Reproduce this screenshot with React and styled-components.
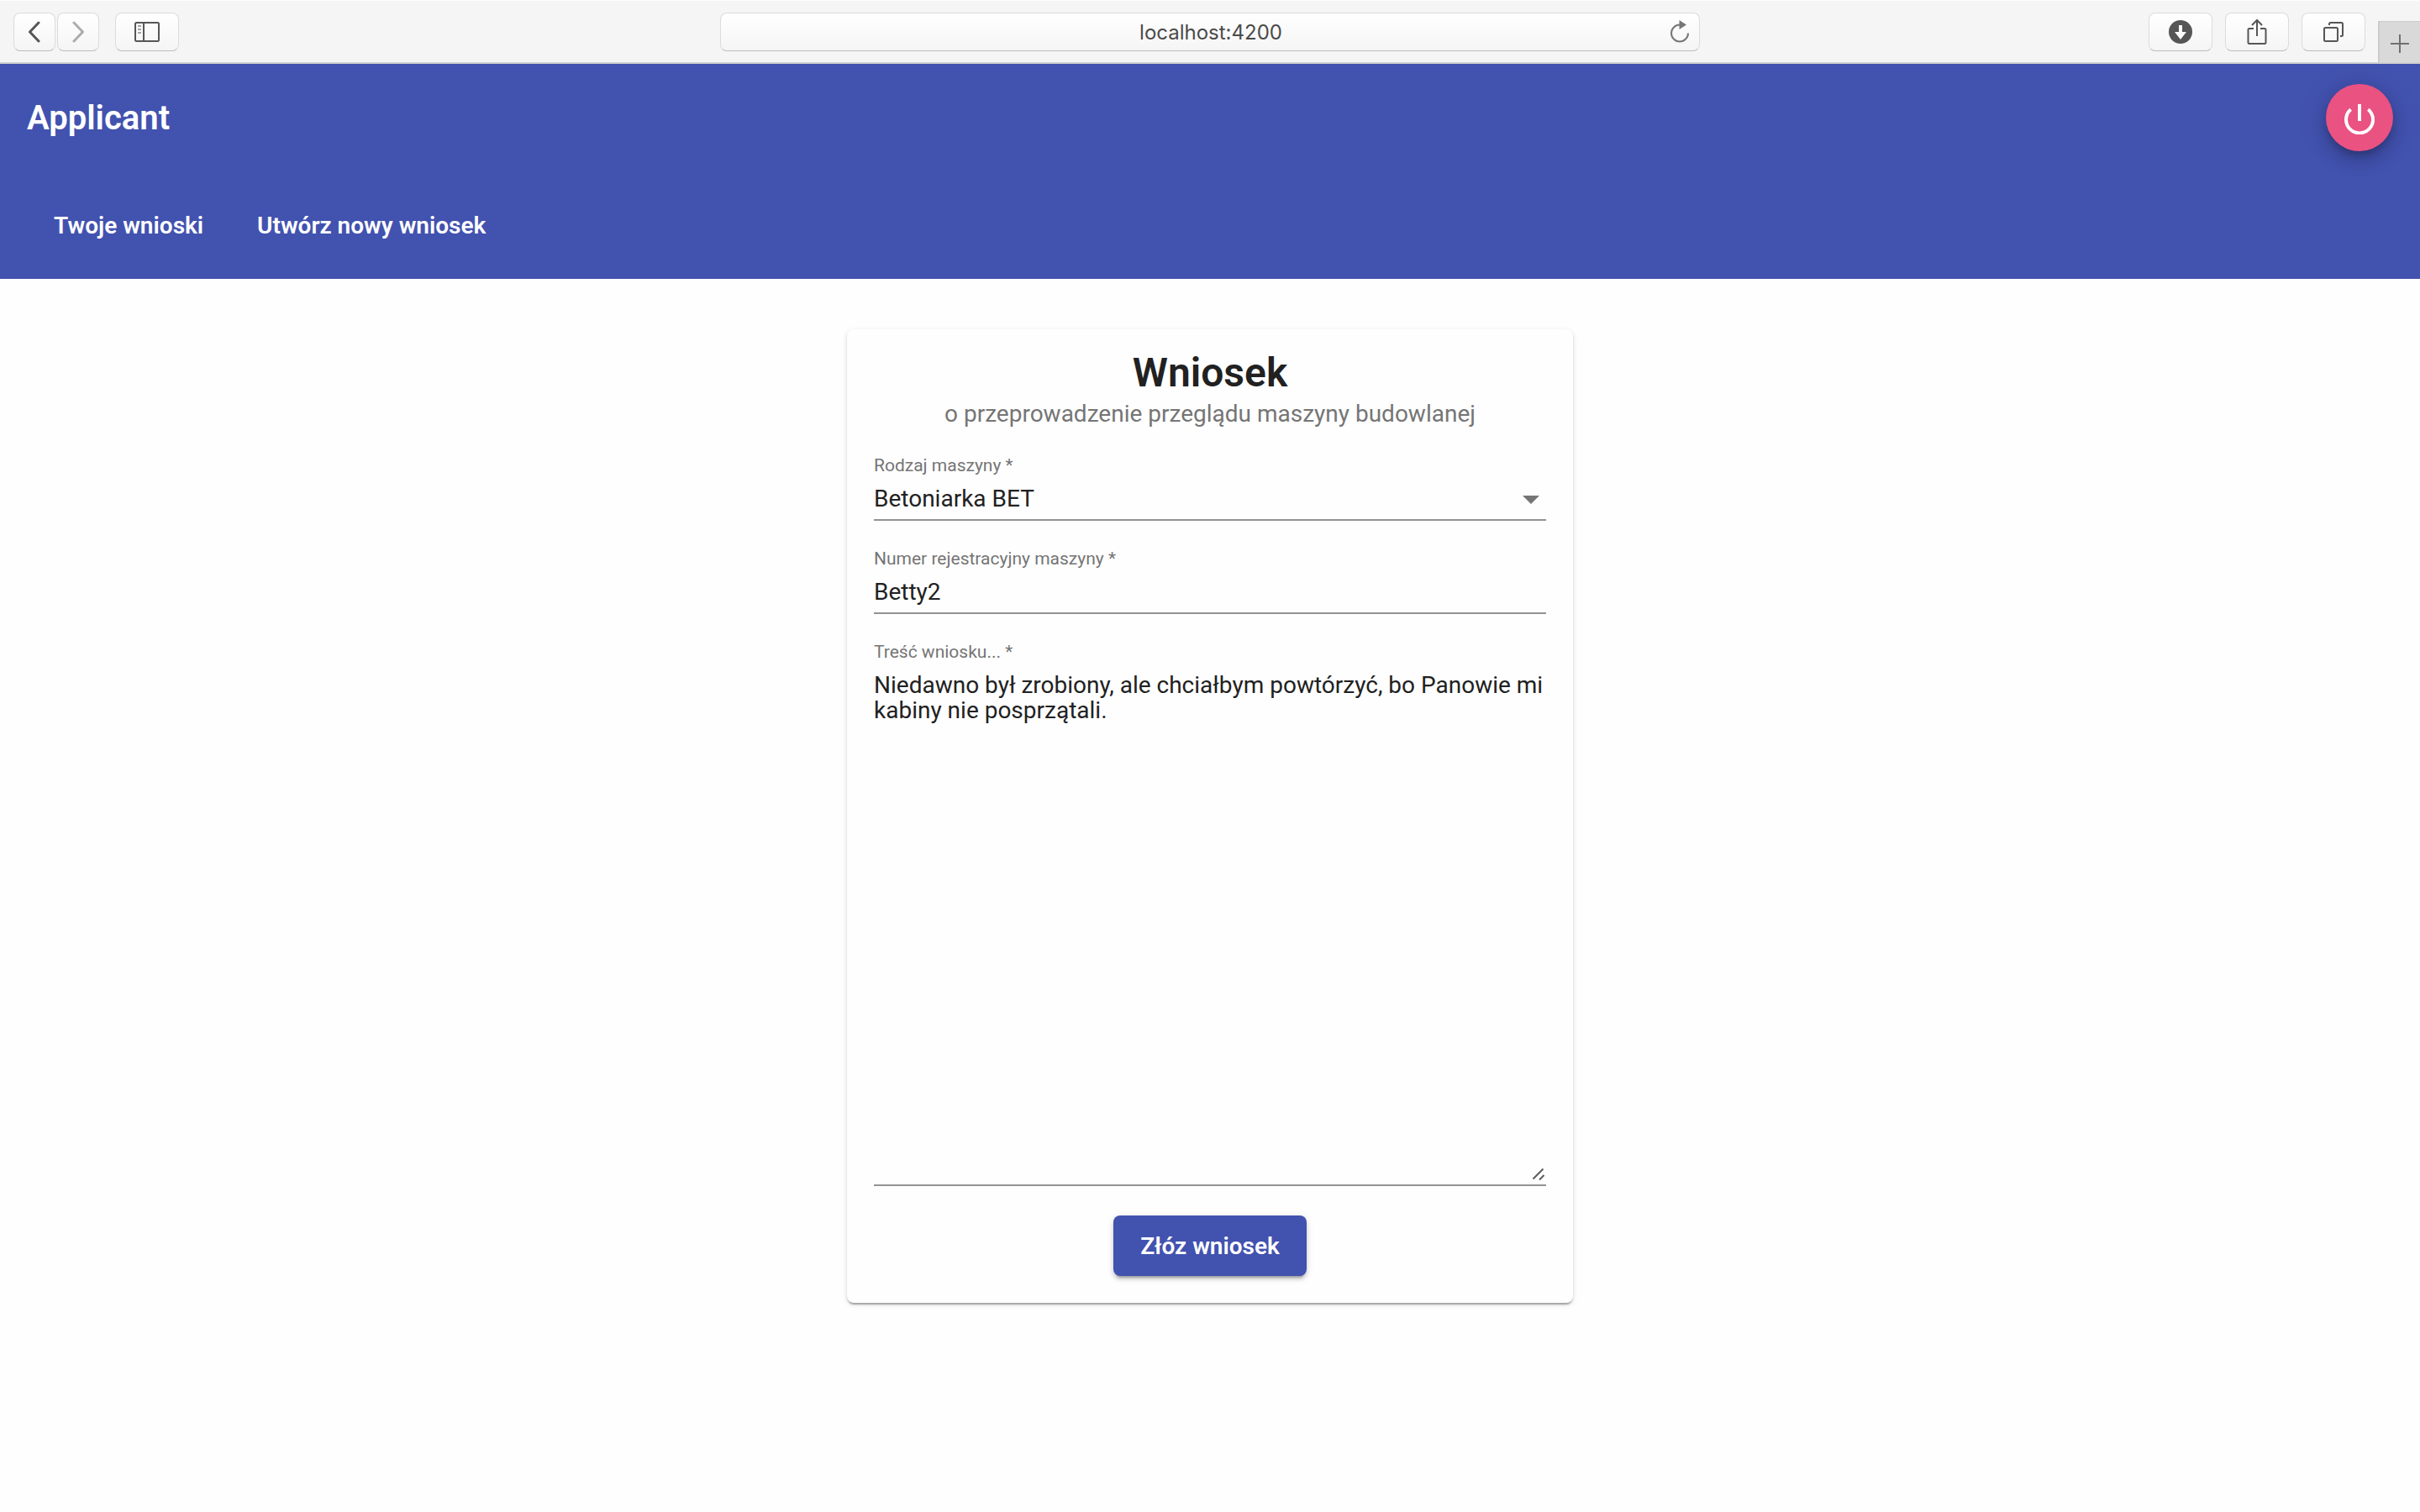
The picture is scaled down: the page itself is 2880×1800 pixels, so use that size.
import React, { useState } from "react";
import styled, { createGlobalStyle } from "styled-components";

const GlobalStyle = createGlobalStyle`
  *, *::before, *::after { box-sizing: border-box; }
  body {
    margin: 0;
    background: #fefefe;
    font-family: Roboto, "Noto Sans", sans-serif;
    color: #212121;
  }
  button, input, select, textarea { font-family: inherit; }
`;

const Page = styled.div`
  min-height: 100vh;
  display: flex;
  flex-direction: column;
`;

const Toolbar = styled.div`
  display: grid;
  grid-template-columns: 1fr minmax(0, 1166px) 1fr;
  align-items: stretch;
  height: 76px;
  background: #f5f5f5;
  border-top: 1px solid #fcfcfc;
  border-bottom: 2px solid #d0d0d0;
`;

const ToolGroup = styled.div`
  display: flex;
  justify-content: ${(p) => (p.$end ? "flex-end" : "flex-start")};
  gap: ${(p) => p.$gap}px;
  padding-left: ${(p) => (p.$end ? 0 : 16)}px;
`;

const Pair = styled.div`
  display: flex;
  gap: 2px;
`;

const chrome = `
  height: 46px;
  margin-top: 14px;
  border: 1px solid #dcdcdc;
  border-bottom-color: #bcbcbc;
  border-radius: 8px;
  background: linear-gradient(#ffffff, #f5f5f5);
`;

const ToolButton = styled.button`
  ${chrome}
  width: ${(p) => (p.$narrow ? 50 : 76)}px;
  display: flex;
  align-items: center;
  justify-content: center;
  padding: 0;
  color: ${(p) => (p.$dim ? "#acacac" : "#565656")};
`;

const AddTab = styled.button`
  align-self: flex-end;
  width: 50px;
  height: 49px;
  display: flex;
  align-items: center;
  justify-content: center;
  padding: 4px 0 0;
  border: 0;
  border-left: 2px solid #cccccc;
  border-top: 1px solid #cccccc;
  background: #d9d9d9;
  color: #707070;
`;

const AddressBar = styled.div`
  ${chrome}
  display: grid;
  grid-template-columns: 46px 1fr 44px;
  align-items: center;
`;

const Address = styled.input`
  grid-column: 2;
  min-width: 0;
  border: 0;
  padding: 2px 0 0;
  background: transparent;
  color: #4a4a4a;
  font: 24px/32px Inter, sans-serif;
  text-align: center;
  outline: none;
`;

const Reload = styled.button`
  display: flex;
  align-items: center;
  justify-content: center;
  border: 0;
  padding: 0;
  background: transparent;
  color: #777777;
`;

const Header = styled.header`
  background: #4252af;
  color: #ffffff;
`;

const HeaderRow = styled.div`
  display: flex;
  align-items: center;
  justify-content: space-between;
  height: 128px;
  padding: 0 32px;
`;

const AppName = styled.span`
  padding-top: 2px;
  font-size: 40px;
  font-weight: 600;
  line-height: 48px;
`;

const Fab = styled.button`
  width: 80px;
  height: 80px;
  display: flex;
  align-items: center;
  justify-content: center;
  border: 0;
  padding: 4px 0 0;
  border-radius: 50%;
  background: #ea5281;
  color: #ffffff;
  box-shadow: 0 6px 10px -2px rgba(0, 0, 0, 0.2), 0 12px 20px rgba(0, 0, 0, 0.14),
    0 2px 36px rgba(0, 0, 0, 0.12);
`;

const Nav = styled.nav`
  display: flex;
  padding-top: 2px;
`;

const NavLink = styled.a`
  padding: 0 32px;
  color: inherit;
  font-size: 28px;
  font-weight: 600;
  line-height: 32px;
  text-decoration: none;
`;

const Main = styled.main`
  flex: 1;
  display: flex;
  justify-content: center;
  align-items: flex-start;
  padding: 60px 32px;
`;

const Card = styled.form`
  width: 100%;
  max-width: 864px;
  display: flex;
  flex-direction: column;
  padding: 32px;
  border-radius: 8px;
  background: #fefefe;
  box-shadow: 0 4px 2px -2px rgba(0, 0, 0, 0.2), 0 2px 2px rgba(0, 0, 0, 0.14),
    0 2px 6px rgba(0, 0, 0, 0.12);
`;

const Title = styled.h1`
  margin: 0 0 13px;
  font-size: 48px;
  font-weight: 600;
  line-height: 40px;
  text-align: center;
`;

const Subtitle = styled.p`
  margin: 0 0 33px;
  color: #757575;
  font-size: 28px;
  line-height: 32px;
  text-align: center;
`;

const Fields = styled.div`
  display: flex;
  flex-direction: column;
  gap: 33px;
`;

const Field = styled.div`
  display: flex;
  flex-direction: column;
  gap: 11px;
  border-bottom: 2px solid #929292;
`;

const Label = styled.label`
  color: #757575;
  font-size: 21px;
  line-height: 24px;
`;

const Control = styled.div`
  position: relative;
  display: flex;
  padding-bottom: ${(p) => (p.$area ? 4 : 9)}px;
`;

const control = `
  width: 100%;
  margin: 0;
  padding: 0;
  border: 0;
  border-radius: 0;
  outline: none;
  background: transparent;
  color: #212121;
  font-size: 28px;
`;

const Select = styled.select`
  ${control}
  height: 32px;
  appearance: none;
`;

const TextInput = styled.input`
  ${control}
  height: 32px;
`;

const TextArea = styled.textarea`
  ${control}
  height: 607px;
  padding-top: 2px;
  line-height: 30px;
  resize: none;
`;

const Arrow = styled.svg`
  position: absolute;
  right: 8px;
  top: 13px;
  color: #757575;
  pointer-events: none;
`;

const Grip = styled.svg`
  position: absolute;
  right: 1px;
  bottom: 4px;
  color: #5c5c5c;
  pointer-events: none;
`;

const Submit = styled.button`
  align-self: center;
  height: 72px;
  margin-top: 35px;
  padding: 0 32px;
  border: 0;
  border-radius: 8px;
  background: #4252af;
  color: #ffffff;
  font-size: 28px;
  font-weight: 600;
  box-shadow: 0 6px 2px -4px rgba(0, 0, 0, 0.2), 0 4px 4px rgba(0, 0, 0, 0.14),
    0 2px 10px rgba(0, 0, 0, 0.12);
`;

const line = { fill: "none", stroke: "currentColor", strokeWidth: 2 };

function BrowserBar() {
  return (
    <Toolbar>
      <ToolGroup $gap={19}>
        <Pair>
          <ToolButton $narrow type="button" aria-label="Wstecz">
            <svg width="16" height="26" viewBox="0 0 16 26" {...line} strokeWidth="3" strokeLinecap="round" strokeLinejoin="round">
              <path d="M13 2 2.5 13 13 24" />
            </svg>
          </ToolButton>
          <ToolButton $narrow $dim type="button" aria-label="Dalej">
            <svg width="16" height="26" viewBox="0 0 16 26" {...line} strokeWidth="3" strokeLinecap="round" strokeLinejoin="round">
              <path d="M3 2 13.5 13 3 24" />
            </svg>
          </ToolButton>
        </Pair>
        <ToolButton type="button" aria-label="Pasek boczny">
          <svg width="30" height="24" viewBox="0 0 30 24" {...line}>
            <rect x="1" y="1" width="28" height="22" rx="1.5" />
            <path d="M11 1v22" />
            <path d="M4 5h4M4 9h4M4 13h4" strokeWidth="1.5" opacity="0.7" />
          </svg>
        </ToolButton>
      </ToolGroup>
      <AddressBar>
        <Address aria-label="Adres" defaultValue="localhost:4200" />
        <Reload type="button" aria-label="Odśwież">
          <svg width="24" height="28" viewBox="0 0 24 28" {...line}>
            <path d="M11 5.500A10 10 0 1 0 21 15.500" />
            <path d="M10.500 0v11l8.500-5.500z" fill="currentColor" stroke="none" />
          </svg>
        </Reload>
      </AddressBar>
      <ToolGroup $end $gap={15}>
        <ToolButton type="button" aria-label="Pobrane">
          <svg width="28" height="28" viewBox="0 0 28 28">
            <circle cx="14" cy="14" r="14" fill="currentColor" />
            <path d="M12 6h4v8h5l-7 9-7-9h5z" fill="#fcfcfc" />
          </svg>
        </ToolButton>
        <ToolButton type="button" aria-label="Udostępnij">
          <svg width="24" height="32" viewBox="0 0 24 32" {...line}>
            <path d="M8 12H3a1.500 1.500 0 0 0-1.500 1.500v15A1.500 1.500 0 0 0 3 30h18a1.500 1.500 0 0 0 1.500-1.500v-15A1.500 1.500 0 0 0 21 12h-5M12 21V2.500M6 8l6-6 6 6" />
          </svg>
        </ToolButton>
        <ToolButton type="button" aria-label="Karty">
          <svg width="24" height="24" viewBox="0 0 24 24" {...line}>
            <rect x="1" y="7" width="16" height="16" rx="1.500" />
            <path d="M7 4V2.500A1.500 1.500 0 0 1 8.500 1h13A1.500 1.500 0 0 1 23 2.500v13a1.500 1.500 0 0 1-1.500 1.500H20" />
          </svg>
        </ToolButton>
        <AddTab type="button" aria-label="Nowa karta">
          <svg width="22" height="22" viewBox="0 0 22 22" {...line}>
            <path d="M11 0v22M0 11h22" />
          </svg>
        </AddTab>
      </ToolGroup>
    </Toolbar>
  );
}

export default function App() {
  const [machine, setMachine] = useState("Betoniarka BET");
  const [number, setNumber] = useState("Betty2");
  const [body, setBody] = useState(
    "Niedawno był zrobiony, ale chciałbym powtórzyć, bo Panowie mi kabiny nie posprzątali."
  );

  return (
    <Page>
      <GlobalStyle />
      <BrowserBar />
      <Header>
        <HeaderRow>
          <AppName>Applicant</AppName>
          <Fab type="button" aria-label="Wyloguj">
            <svg width="36" height="36" viewBox="0 0 36 36" fill="none" stroke="currentColor" strokeWidth="4">
              <path d="M18 0v20M7.700 6.200a16 16 0 1 0 20.600 0" />
            </svg>
          </Fab>
        </HeaderRow>
        <HeaderRow>
          <Nav>
            <NavLink href="#wnioski">Twoje wnioski</NavLink>
            <NavLink href="#nowy">Utwórz nowy wniosek</NavLink>
          </Nav>
        </HeaderRow>
      </Header>
      <Main>
        <Card onSubmit={(e) => e.preventDefault()}>
          <Title>Wniosek</Title>
          <Subtitle>o przeprowadzenie przeglądu maszyny budowlanej</Subtitle>
          <Fields>
            <Field>
              <Label htmlFor="machine">Rodzaj maszyny *</Label>
              <Control>
                <Select id="machine" value={machine} onChange={(e) => setMachine(e.target.value)}>
                  <option>Betoniarka BET</option>
                </Select>
                <Arrow width="20" height="10" viewBox="0 0 20 10">
                  <path d="M0 0h20L10 10z" fill="currentColor" />
                </Arrow>
              </Control>
            </Field>
            <Field>
              <Label htmlFor="number">Numer rejestracyjny maszyny *</Label>
              <Control>
                <TextInput id="number" value={number} onChange={(e) => setNumber(e.target.value)} />
              </Control>
            </Field>
            <Field>
              <Label htmlFor="body">Treść wniosku... *</Label>
              <Control $area>
                <TextArea id="body" spellCheck={false} value={body} onChange={(e) => setBody(e.target.value)} />
                <Grip width="16" height="16" viewBox="0 0 16 16" {...line}>
                  <path d="M1.500 13.500 13.500 1.500M9 14.500 14.500 9" />
                </Grip>
              </Control>
            </Field>
          </Fields>
          <Submit type="submit">Złóz wniosek</Submit>
        </Card>
      </Main>
    </Page>
  );
}
